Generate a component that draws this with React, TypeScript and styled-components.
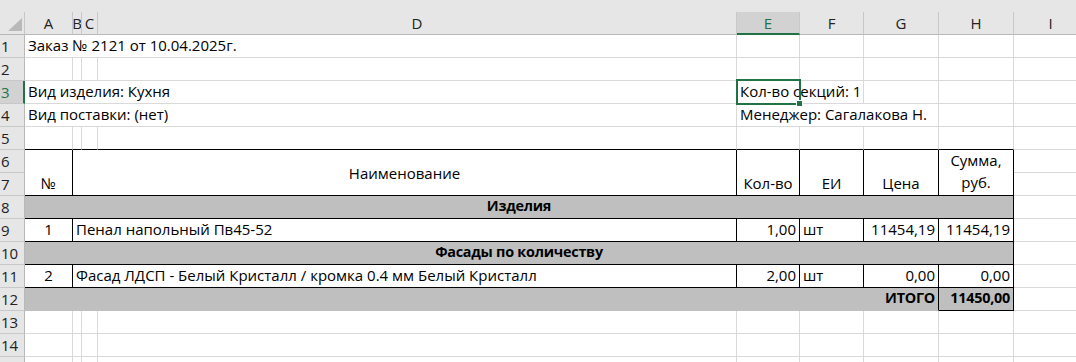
import React from "react";
import styled, { createGlobalStyle, css } from "styled-components";

const GlobalStyle = createGlobalStyle`
  html, body {
    margin: 0;
    padding: 0;
    background: #ffffff;
    overflow: hidden;
  }
  body {
    font-family: "Open Sans", "Noto Sans", sans-serif;
  }
`;

const GRID = "#d9d9d9";
const HEAD_BG = "#e6e6e6";
const HEAD_LINE = "#c8c8c8";
const FILL = "#bfbfbf";
const GREEN = "#217346";

type Edge = "grid" | "black" | "fill" | "none";
const edgeColor = (e: Edge) =>
  e === "black" ? "#000000" : e === "fill" ? FILL : e === "none" ? "transparent" : GRID;

/* column widths include the 1px gridline on their right edge */
const COLS = ["A", "B", "C", "D", "E", "F", "G", "H", "I"];
const COL_WIDTHS = [48, 9, 16, 639, 63, 64, 75, 75, 74];
const ROW_COUNT = 15;
const LABELLED_ROWS = 14;

const Sheet = styled.div`
  display: grid;
  grid-template-columns: 25px ${COL_WIDTHS.map((w) => `${w}px`).join(" ")};
  grid-template-rows: 12px 23px repeat(${ROW_COUNT}, 23px);
  width: max-content;
  font-size: 15px;
  color: #000000;
`;

const TopStrip = styled.div`
  grid-column: 1 / -1;
  grid-row: 1;
  background: ${HEAD_BG};
`;

const Corner = styled.div`
  grid-column: 1;
  grid-row: 2;
  background: ${HEAD_BG};
  border-right: 1px solid ${HEAD_LINE};
  border-bottom: 1px solid #b8b8b8;
  box-sizing: border-box;
  display: flex;
  align-items: flex-end;
  justify-content: flex-end;
  padding: 0 2px 3px 0;
`;

const ColHeader = styled.div<{ $col: number; $active?: boolean }>`
  grid-column: ${(p) => p.$col};
  grid-row: 2;
  box-sizing: border-box;
  background: ${(p) => (p.$active ? "#d2d2d2" : HEAD_BG)};
  color: ${(p) => (p.$active ? GREEN : "#222222")};
  border-right: 1px solid ${HEAD_LINE};
  border-bottom: ${(p) => (p.$active ? `2px solid ${GREEN}` : "1px solid #b8b8b8")};
  display: flex;
  align-items: center;
  justify-content: center;
  font-size: 15px;
  line-height: 20px;
  overflow: hidden;
`;

const RowHeader = styled.div<{ $row: number; $active?: boolean }>`
  grid-column: 1;
  grid-row: ${(p) => p.$row + 2};
  box-sizing: border-box;
  background: ${(p) => (p.$active ? "#d2d2d2" : HEAD_BG)};
  color: ${(p) => (p.$active ? GREEN : "#222222")};
  border-right: ${(p) => (p.$active ? `2px solid ${GREEN}` : "1px solid #b8b8b8")};
  border-bottom: 1px solid ${HEAD_LINE};
  display: flex;
  align-items: center;
  padding-left: 1px;
  font-size: 15px;
  line-height: 20px;
  overflow: hidden;
  white-space: nowrap;
`;

type Align = "left" | "center" | "right";
type VAlign = "top" | "middle" | "bottom";

const CellBox = styled.div<{
  $col: number;
  $span: number;
  $row: number;
  $rspan: number;
  $align: Align;
  $valign: VAlign;
  $fill?: boolean;
  $bold?: boolean;
  $right: Edge;
  $bottom: Edge;
  $wrap?: boolean;
}>`
  grid-column: ${(p) => `${p.$col} / span ${p.$span}`};
  grid-row: ${(p) => `${p.$row + 2} / span ${p.$rspan}`};
  box-sizing: border-box;
  min-width: 0;
  display: flex;
  justify-content: ${(p) =>
    p.$align === "left" ? "flex-start" : p.$align === "right" ? "flex-end" : "center"};
  align-items: ${(p) =>
    p.$valign === "top" ? "flex-start" : p.$valign === "middle" ? "center" : "flex-end"};
  padding: 0 3px ${(p) => (p.$valign === "bottom" ? "2px" : "0")} 3px;
  background: ${(p) => (p.$fill ? FILL : "transparent")};
  border-right: 1px solid ${(p) => edgeColor(p.$right)};
  border-bottom: 1px solid ${(p) => edgeColor(p.$bottom)};
  line-height: 20px;
  white-space: ${(p) => (p.$wrap ? "pre-line" : "nowrap")};
  text-align: ${(p) => p.$align};
  overflow: visible;
  ${(p) =>
    p.$bold &&
    css`
      font-weight: 700;
      font-size: 14.4px;
      letter-spacing: -0.25px;
    `}
  ${(p) =>
    p.$wrap &&
    css`
      line-height: 22px;
    `}
`;

const Selection = styled.div`
  grid-column: 6;
  grid-row: 5;
  margin: -2px -1px -1px -1px;
  border: 2px solid ${GREEN};
  position: relative;
  z-index: 2;
  pointer-events: none;
`;

const FillHandle = styled.div`
  position: absolute;
  right: -4px;
  bottom: -4px;
  width: 5px;
  height: 5px;
  background: ${GREEN};
  border: 1px solid #ffffff;
`;

type CellSpec = {
  r: number;
  c: string;
  cs?: number;
  rs?: number;
  text?: string;
  align?: Align;
  valign?: VAlign;
  fill?: boolean;
  bold?: boolean;
  right?: Edge;
  bottom?: Edge;
  wrap?: boolean;
};

const colIndex = (c: string) => COLS.indexOf(c) + 2;

const boxed = { right: "black" as Edge, bottom: "black" as Edge };

const cells: CellSpec[] = [
  { r: 1, c: "A", cs: 4, text: "Заказ № 2121 от 10.04.2025г." },
  { r: 3, c: "A", cs: 4, text: "Вид изделия: Кухня" },
  { r: 3, c: "E", cs: 2, text: "Кол-во секций: 1" },
  { r: 4, c: "A", cs: 4, text: "Вид поставки: (нет)" },
  { r: 4, c: "E", cs: 3, text: "Менеджер: Сагалакова Н." },
  ...["A", "B", "C", "D", "E", "F", "G", "H"].map(
    (c): CellSpec => ({ r: 5, c, bottom: "black" })
  ),

  { r: 6, c: "A", rs: 2, text: "№", align: "center", ...boxed },
  { r: 6, c: "B", cs: 3, rs: 2, text: "Наименование", align: "center", valign: "middle", ...boxed },
  { r: 6, c: "E", rs: 2, text: "Кол-во", align: "center", ...boxed },
  { r: 6, c: "F", rs: 2, text: "ЕИ", align: "center", ...boxed },
  { r: 6, c: "G", rs: 2, text: "Цена", align: "center", ...boxed },
  { r: 6, c: "H", rs: 2, text: "Сумма,\nруб.", align: "center", wrap: true, ...boxed },

  { r: 8, c: "A", cs: 8, text: "Изделия", align: "center", bold: true, fill: true, ...boxed },

  { r: 9, c: "A", text: "1", align: "center", ...boxed },
  { r: 9, c: "B", cs: 3, text: "Пенал напольный Пв45-52", ...boxed },
  { r: 9, c: "E", text: "1,00", align: "right", ...boxed },
  { r: 9, c: "F", text: "шт", ...boxed },
  { r: 9, c: "G", text: "11454,19", align: "right", ...boxed },
  { r: 9, c: "H", text: "11454,19", align: "right", ...boxed },

  { r: 10, c: "A", cs: 8, text: "Фасады по количеству", align: "center", bold: true, fill: true, ...boxed },

  { r: 11, c: "A", text: "2", align: "center", ...boxed },
  {
    r: 11,
    c: "B",
    cs: 3,
    text: "Фасад ЛДСП - Белый Кристалл / кромка 0.4 мм Белый Кристалл",
    ...boxed,
  },
  { r: 11, c: "E", text: "2,00", align: "right", ...boxed },
  { r: 11, c: "F", text: "шт", ...boxed },
  { r: 11, c: "G", text: "0,00", align: "right", ...boxed },
  { r: 11, c: "H", text: "0,00", align: "right", ...boxed },

  { r: 12, c: "A", cs: 7, text: "ИТОГО", align: "right", bold: true, fill: true, right: "black", bottom: "fill" },
  { r: 12, c: "H", text: "11450,00", align: "right", bold: true, fill: true, ...boxed },
];

/* every grid position not covered by a defined cell gets a blank one */
function buildCells(): CellSpec[] {
  const taken = new Set<string>();
  cells.forEach((s) => {
    const start = COLS.indexOf(s.c);
    for (let dc = 0; dc < (s.cs ?? 1); dc++)
      for (let dr = 0; dr < (s.rs ?? 1); dr++) taken.add(`${s.r + dr}:${start + dc}`);
  });
  const blanks: CellSpec[] = [];
  for (let r = 1; r <= ROW_COUNT; r++)
    COLS.forEach((c, i) => {
      if (!taken.has(`${r}:${i}`)) blanks.push({ r, c });
    });
  return [...blanks, ...cells];
}

const CornerMark = () => (
  <svg width="14" height="13" viewBox="0 0 14 13" aria-hidden="true">
    <polygon points="14,0 14,13 0,13" fill="#b9b9b9" />
  </svg>
);

export default function App() {
  const all = buildCells();
  return (
    <>
      <GlobalStyle />
      <Sheet>
        <TopStrip />
        <Corner>
          <CornerMark />
        </Corner>
        {COLS.map((c, i) => (
          <ColHeader key={c} $col={i + 2} $active={c === "E"}>
            {c}
          </ColHeader>
        ))}
        {Array.from({ length: ROW_COUNT }, (_, i) => i + 1).map((r) => (
          <RowHeader key={r} $row={r} $active={r === 3}>
            {r <= LABELLED_ROWS ? r : null}
          </RowHeader>
        ))}
        {all.map((s) => (
          <CellBox
            key={`${s.r}-${s.c}`}
            $col={colIndex(s.c)}
            $span={s.cs ?? 1}
            $row={s.r}
            $rspan={s.rs ?? 1}
            $align={s.align ?? "left"}
            $valign={s.valign ?? "bottom"}
            $fill={s.fill}
            $bold={s.bold}
            $right={s.right ?? "grid"}
            $bottom={s.bottom ?? "grid"}
            $wrap={s.wrap}
          >
            {s.text}
          </CellBox>
        ))}
        <Selection>
          <FillHandle />
        </Selection>
      </Sheet>
    </>
  );
}
